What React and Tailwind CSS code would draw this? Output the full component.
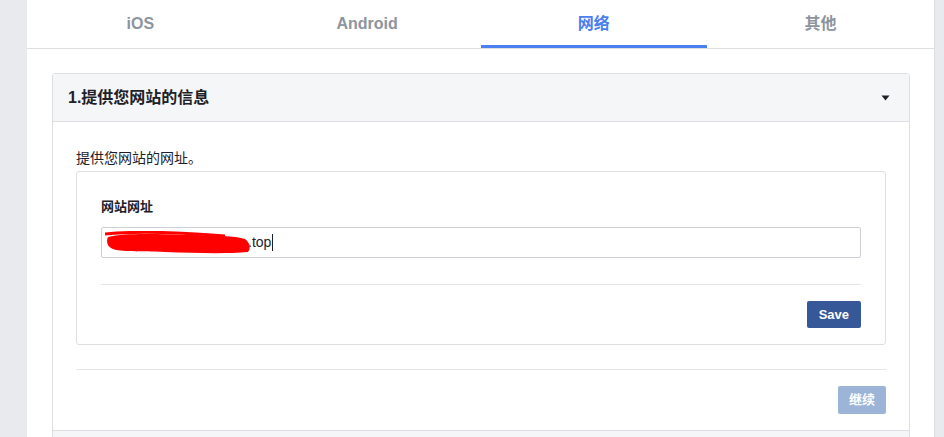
import { useState } from "react";

const tabs = ["iOS", "Android", "网络", "其他"];

export default function App() {
    const [active, setActive] = useState(2);

    return (
        <div
            className="min-h-screen w-full bg-[#e9eaed] pl-[27px] pr-[9px]"
            style={{ fontFamily: '"Liberation Sans", Arial, "Noto Sans CJK SC", sans-serif' }}
        >
            <div className="h-[437px] overflow-hidden bg-white border-r border-[#dddfe2]">
                {/* tabs */}
                <div className="flex h-[49px] border-b border-[#dddfe2]">
                    {tabs.map((t, i) => (
                        <button
                            key={t}
                            onClick={() => setActive(i)}
                            className={
                                "relative flex-1 flex items-center justify-center text-[16px] font-bold " +
                                (i === active ? "text-[#4a80f0]" : "text-[#8d949e]")
                            }
                        >
                            {t}
                            {i === active && (
                                <span className="absolute left-0 right-0 bottom-0 h-[3px] bg-[#4a80f0]" />
                            )}
                        </button>
                    ))}
                </div>

                <div className="pl-[25px] pr-[24px] pt-[24px]">
                    <div className="border border-[#dddfe2] rounded-[3px]">
                        {/* step header */}
                        <div className="flex items-center justify-between h-[48px] bg-[#f5f6f7] border-b border-[#dddfe2] pl-[15px] pr-[19px]">
                            <h2 className="text-[16px] font-bold text-[#1d2129]">1.提供您网站的信息</h2>
                            <svg width="9" height="6" viewBox="0 0 9 6">
                                <path d="M0.5 0.5h8L4.5 5.5z" fill="#1d2129" />
                            </svg>
                        </div>

                        <div className="px-[23px] pt-[26px]">
                            <p className="text-[14px] leading-[20px] text-[#1d2129]">提供您网站的网址。</p>

                            <div className="mt-[3px] border border-[#dddfe2] rounded-[3px] px-[24px] pt-[26px] pb-[16px]">
                                <label className="block text-[13px] font-bold leading-[18px] text-[#1d2129]">网站网址</label>
                                <div className="relative mt-[11px]">
                                    <div className="h-[31px] border border-[#ccd0d5] rounded-[2px] flex items-center pl-[146px] text-[14px] text-[#1d2129]">
                                        .top<span className="ml-[1px] inline-block w-px h-[17px] bg-[#1d2129]" />
                                    </div>
                                    <svg
                                        className="absolute left-[4px] top-[4px]"
                                        width="148"
                                        height="24"
                                        viewBox="0 0 148 24"
                                    >
                                        <path
                                            d="M3 6 C20 2 50 3 80 4 C110 4 130 5 140 8 C145 12 146 17 143 21 C120 23 90 22 60 21 C35 20 15 21 8 18 C2 16 1 10 3 6 Z"
                                            fill="#ff0000"
                                        />
                                        <path d="M0 3 C30 0 70 1 120 5" stroke="#ff0000" strokeWidth="3" fill="none" />
                                    </svg>
                                </div>

                                <div className="mt-[26px] border-t border-[#e5e5e5]" />

                                <div className="flex justify-end mt-[16px]">
                                    <button className="h-[27px] px-[12px] rounded-[2px] bg-[#365899] text-white text-[13px] font-bold">
                                        Save
                                    </button>
                                </div>
                            </div>

                            <div className="mt-[24px] border-t border-[#e5e5e5]" />

                            <div className="flex justify-end mt-[16px] pb-[16px]">
                                <button className="h-[28px] w-[48px] rounded-[2px] bg-[#9cb4d8] text-white text-[13px] font-bold">
                                    继续
                                </button>
                            </div>
                        </div>

                        <div className="h-[40px] bg-[#f5f6f7] border-t border-[#dddfe2]" />
                    </div>
                </div>
            </div>
        </div>
    );
}
